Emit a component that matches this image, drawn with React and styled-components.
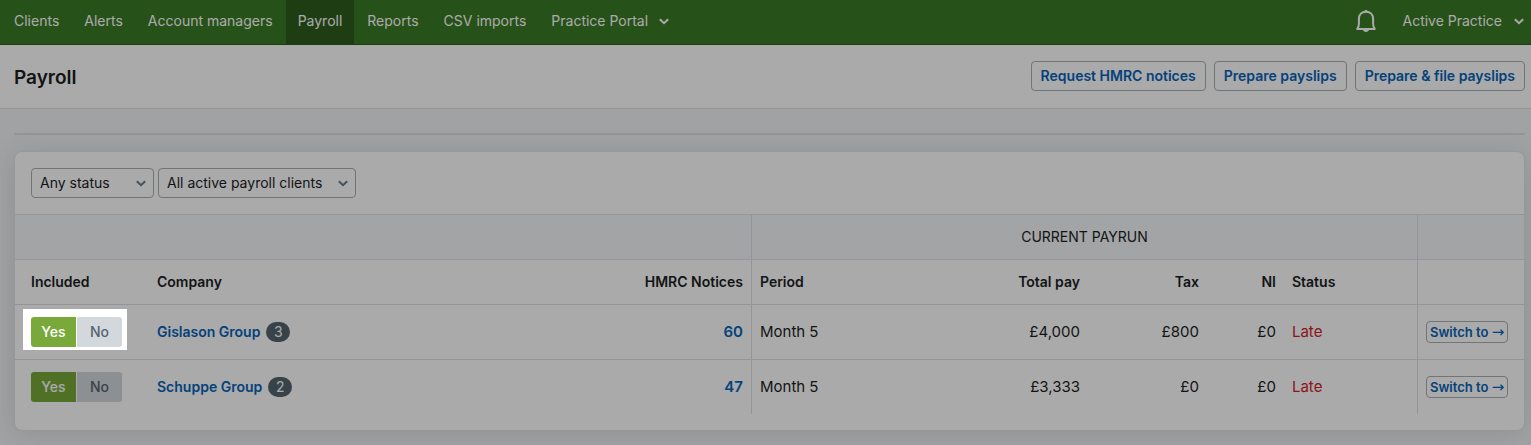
import React, { useState } from 'react';
import styled, { createGlobalStyle } from 'styled-components';

const GlobalStyle = createGlobalStyle`
  * {
    box-sizing: border-box;
  }

  body {
    margin: 0;
    background: #f1f3f5;
    color: #1b1e1f;
    font-family: Inter, 'Liberation Sans', sans-serif;
    font-size: 15px;
    line-height: 20px;
  }

  button, select {
    font: inherit;
  }
`;

const NavBar = styled.nav`
  display: flex;
  justify-content: space-between;
  height: 45px;
  padding: 0 7px 0 2px;
  background: #397a24;
  border-bottom: 1px solid #2a611a;
`;

const NavGroup = styled.div`
  display: flex;
  align-items: stretch;
  gap: 1px;
`;

const NavLink = styled.a`
  display: flex;
  align-items: center;
  gap: 11px;
  padding: 0 12px 2px;
  color: #fff;
  font-size: 14px;
  text-decoration: none;
  white-space: nowrap;
  background: ${({ $active }) => ($active ? '#2d5c1d' : 'transparent')};
`;

const AccountButton = styled.button`
  display: flex;
  align-items: center;
  gap: 12px;
  padding: 0 0 2px;
  border: 0;
  background: none;
  color: #fff;
  font-size: 14px;
  white-space: nowrap;
`;

const BellButton = styled.button`
  display: flex;
  align-items: center;
  margin-right: 25px;
  padding: 0 0 2px;
  border: 0;
  background: none;
  color: #fff;
`;

const TitleBar = styled.header`
  display: flex;
  align-items: center;
  justify-content: space-between;
  height: 64px;
  padding: 0 6px 2px 14px;
  background: #fff;
  border-bottom: 1px solid #dcdee2;
`;

const Title = styled.h1`
  margin: 0;
  padding-top: 4px;
  font-size: 19px;
  font-weight: 600;
  line-height: 24px;
`;

const Actions = styled.div`
  display: flex;
  gap: 8px;
`;

const OutlineButton = styled.button`
  height: ${({ $small }) => ($small ? '22px' : '30px')};
  padding: 0 ${({ $small }) => ($small ? '3px' : '9px')};
  border: 1px solid #a9b0b3;
  border-radius: 4px;
  background: #fff;
  color: #0663b8;
  font-size: ${({ $small }) => ($small ? '13px' : '14px')};
  font-weight: 600;
  line-height: 20px;
  white-space: nowrap;
`;

const Arrow = styled.span`
  font-family: 'DejaVu Sans', sans-serif;
  font-size: 15px;
  font-weight: 400;
`;

const Content = styled.main`
  padding: 24px 6px 14px 14px;
`;

const Divider = styled.hr`
  height: 2px;
  margin: 0 0 16px;
  border: 0;
  background: #dee0e3;
`;

const Card = styled.section`
  padding-bottom: 16px;
  background: #fff;
  border: 1px solid #e2e4e7;
  border-radius: 8px;
  box-shadow: 0 2px 24px rgba(30, 36, 50, 0.12);
`;

const Filters = styled.form`
  display: flex;
  gap: 4px;
  padding: 16px;
`;

const SelectWrap = styled.div`
  position: relative;
  width: ${({ $width }) => $width};

  svg {
    position: absolute;
    top: 12px;
    right: 8px;
    color: #6b7a83;
    pointer-events: none;
  }
`;

const Select = styled.select`
  appearance: none;
  display: block;
  width: 100%;
  height: 30px;
  padding: 0 24px 0 8px;
  border: 1px solid #a9b0b3;
  border-radius: 4px;
  background: #fff;
  color: #1b1e1f;
  font-size: 14px;
`;

const Table = styled.table`
  width: 100%;
  table-layout: fixed;
  border-collapse: separate;
  border-spacing: 0;
`;

const Cell = styled.td`
  height: 55px;
  padding: 0 8px;
  border-top: 1px solid #dee0e4;
  border-left: ${({ $divided }) => ($divided ? '1px solid #dee0e4' : '0')};
  text-align: ${({ $align }) => $align || 'left'};
  color: ${({ $late }) => ($late ? '#d32026' : 'inherit')};
  white-space: nowrap;

  &:first-child {
    padding-left: 16px;
  }
`;

const HeadCell = styled(Cell).attrs({ as: 'th' })`
  height: 45px;
  font-weight: 600;
  font-size: 14px;
`;

const GroupCell = styled(HeadCell)`
  background: #f5f7fa;
  font-weight: 400;
  text-transform: uppercase;
`;

const CompanyLink = styled.a`
  color: #0663b8;
  font-size: 14px;
  font-weight: 600;
  text-decoration: none;
`;

const NoticesLink = styled(CompanyLink)`
  font-size: 15px;
`;

const Badge = styled.span`
  display: inline-block;
  min-width: 24px;
  margin-left: 6px;
  padding: 0 6px;
  border-radius: 10px;
  background: #54656e;
  color: #fff;
  font-size: 14px;
  line-height: 20px;
  text-align: center;
`;

const Toggle = styled.div`
  position: relative;
  display: inline-flex;
  gap: 1px;
  vertical-align: middle;

  /* tour step: dims everything around the highlighted toggle */
  &::after {
    content: '';
    display: ${({ $spotlight }) => ($spotlight ? 'block' : 'none')};
    position: absolute;
    z-index: 10;
    inset: -8px -5px -3px -8px;
    box-shadow: 0 0 0 4000px rgba(0, 0, 0, 0.333);
    pointer-events: none;
  }
`;

const ToggleButton = styled.button`
  width: 45px;
  height: 30px;
  padding: 0;
  border: 0;
  border-radius: ${({ $side }) => ($side === 'left' ? '3px 0 0 3px' : '0 3px 3px 0')};
  background: ${({ $side }) => ($side === 'left' ? '#78a93a' : '#d3d8dd')};
  color: ${({ $side }) => ($side === 'left' ? '#fff' : '#54656e')};
  font-size: 14px;
  font-weight: 500;
`;

const Chevron = () => (
  <svg width="10" height="7" viewBox="0 0 10 7" fill="none" stroke="currentColor" strokeWidth="2" aria-hidden="true">
    <path d="M.8 1.200L5 5.200l4.200-4" />
  </svg>
);

const Bell = () => (
  <svg width="20" height="22" viewBox="0 0 20 22" fill="none" aria-hidden="true">
    <path
      d="M1.200 18.900c1.400-1.400 1.700-3 1.700-5.400V9.100C2.900 4.700 5.600 1.700 10 1.700s7.100 3 7.100 7.400v4.400c0 2.400.3 4 1.700 5.400z"
      stroke="currentColor"
      strokeWidth="2"
      strokeLinejoin="round"
    />
    <path d="M8.300.9a1.800 1.200 0 0 1 3.400 0zM6.800 19.500h6.400c-.4 1.600-1.600 2.500-3.200 2.500s-2.800-.9-3.200-2.500z" fill="currentColor" />
  </svg>
);

const links = ['Clients', 'Alerts', 'Account managers', 'Payroll', 'Reports', 'CSV imports', 'Practice Portal'];

const clients = [
  { name: 'Gislason Group', count: 3, notices: 60, period: 'Month 5', total: '£4,000', tax: '£800', ni: '£0', status: 'Late' },
  { name: 'Schuppe Group', count: 2, notices: 47, period: 'Month 5', total: '£3,333', tax: '£0', ni: '£0', status: 'Late' },
];

// the company column takes whatever the others leave
const columns = [134, undefined, 131, 170, 167, 119, 77, 133, 107];

const ClientRow = ({ client, spotlight }) => {
  const [included, setIncluded] = useState(true);

  return (
    <tr>
      <Cell>
        <Toggle $spotlight={spotlight} role="group" aria-label={`Include ${client.name}`}>
          <ToggleButton $side="left" aria-pressed={included} onClick={() => setIncluded(true)}>Yes</ToggleButton>
          <ToggleButton $side="right" aria-pressed={!included} onClick={() => setIncluded(false)}>No</ToggleButton>
        </Toggle>
      </Cell>
      <Cell>
        <CompanyLink href="#company">{client.name}</CompanyLink>
        <Badge>{client.count}</Badge>
      </Cell>
      <Cell $align="right">
        <NoticesLink href="#notices">{client.notices}</NoticesLink>
      </Cell>
      <Cell $divided>{client.period}</Cell>
      <Cell $align="right">{client.total}</Cell>
      <Cell $align="right">{client.tax}</Cell>
      <Cell $align="right">{client.ni}</Cell>
      <Cell $late={client.status === 'Late'}>{client.status}</Cell>
      <Cell $divided>
        <OutlineButton $small>Switch to <Arrow>→</Arrow></OutlineButton>
      </Cell>
    </tr>
  );
};

const App = () => (
  <>
    <GlobalStyle />
    <NavBar>
      <NavGroup>
        {links.map((link) => (
          <NavLink key={link} href="#nav" $active={link === 'Payroll'}>
            {link}
            {link === 'Practice Portal' && <Chevron />}
          </NavLink>
        ))}
      </NavGroup>
      <NavGroup>
        <BellButton aria-label="Notifications">
          <Bell />
        </BellButton>
        <AccountButton>
          Active Practice
          <Chevron />
        </AccountButton>
      </NavGroup>
    </NavBar>

    <TitleBar>
      <Title>Payroll</Title>
      <Actions>
        <OutlineButton>Request HMRC notices</OutlineButton>
        <OutlineButton>Prepare payslips</OutlineButton>
        <OutlineButton>Prepare &amp; file payslips</OutlineButton>
      </Actions>
    </TitleBar>

    <Content>
      <Divider />
      <Card>
        <Filters>
          <SelectWrap $width="123px">
            <Select aria-label="Status">
              <option>Any status</option>
            </Select>
            <Chevron />
          </SelectWrap>
          <SelectWrap $width="198px">
            <Select aria-label="Clients">
              <option>All active payroll clients</option>
            </Select>
            <Chevron />
          </SelectWrap>
        </Filters>

        <Table>
          <colgroup>
            {columns.map((width, index) => (
              <col key={index} width={width} />
            ))}
          </colgroup>
          <thead>
            <tr>
              <GroupCell colSpan={3} />
              <GroupCell colSpan={5} $align="center" $divided>Current payrun</GroupCell>
              <GroupCell $divided />
            </tr>
            <tr>
              <HeadCell>Included</HeadCell>
              <HeadCell>Company</HeadCell>
              <HeadCell $align="right">HMRC Notices</HeadCell>
              <HeadCell $divided>Period</HeadCell>
              <HeadCell $align="right">Total pay</HeadCell>
              <HeadCell $align="right">Tax</HeadCell>
              <HeadCell $align="right">NI</HeadCell>
              <HeadCell>Status</HeadCell>
              <HeadCell $divided />
            </tr>
          </thead>
          <tbody>
            {clients.map((client, index) => (
              <ClientRow key={client.name} client={client} spotlight={index === 0} />
            ))}
          </tbody>
        </Table>
      </Card>
    </Content>
  </>
);

export default App;
